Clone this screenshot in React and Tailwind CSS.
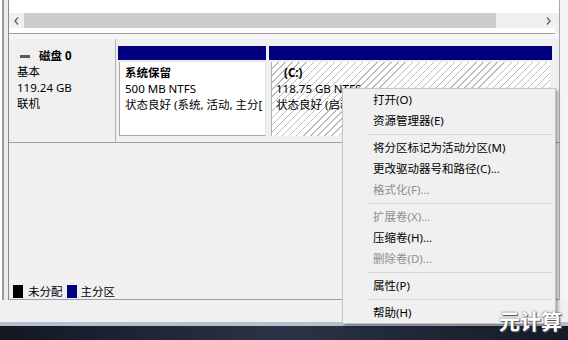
import React from "react";

const menuItems = [
  { label: "打开(O)" },
  { label: "资源管理器(E)" },
  { sep: true },
  { label: "将分区标记为活动分区(M)" },
  { label: "更改驱动器号和路径(C)..." },
  { label: "格式化(F)...", disabled: true },
  { sep: true },
  { label: "扩展卷(X)...", disabled: true },
  { label: "压缩卷(H)..." },
  { label: "删除卷(D)...", disabled: true },
  { sep: true },
  { label: "属性(P)" },
  { sep: true },
  { label: "帮助(H)" },
];

function Chevron({ dir }) {
  return (
    <svg width="5" height="8" viewBox="0 0 5 8">
      <path
        d={dir === "left" ? "M4 0.5 L1 4 L4 7.5" : "M1 0.5 L4 4 L1 7.5"}
        fill="none"
        stroke="#606060"
        strokeWidth="1.3"
      />
    </svg>
  );
}

function ContextMenu() {
  return (
    <div className="absolute left-[342px] top-[88px] w-[214px] bg-[#f0f0f0] border border-[#c4c4c4] shadow-[2px_2px_3px_rgba(0,0,0,0.35)]">
      {menuItems.map((item, i) =>
        item.sep ? (
          <div key={i} className="h-[6px] flex items-center ml-[24px] mr-[3px]">
            <div className="h-px w-full bg-[#d4d4d4]" />
          </div>
        ) : (
          <div
            key={i}
            className={
              "h-[21px] flex items-center pl-[30px] " +
              (item.disabled ? "text-[#8f8f8f]" : "text-black")
            }
          >
            {item.label}
          </div>
        )
      )}
    </div>
  );
}

export default function App() {
  return (
    <div className="relative w-[568px] h-[340px] overflow-hidden bg-[#f0f0f0] text-[11.5px] leading-[16px] text-black font-['Noto_Sans','Noto_Sans_CJK_SC',sans-serif]">
      <div className="flex h-[300px]">
        {/* left window frame */}
        <div className="flex shrink-0">
          <div className="w-[2px] bg-white" />
          <div className="w-[2px] bg-[#9a9a9a]" />
          <div className="w-[4px] bg-[#ececec]" />
          <div className="w-px bg-[#8a8a8a]" />
        </div>

        <div className="w-[550px] flex flex-col">
          {/* top list area + scrollbar */}
          <div className="h-[13px] bg-white" />
          <div className="h-[15px] flex items-center bg-[#f0f0f0]">
            <div className="w-[15px] flex justify-center">
              <Chevron dir="left" />
            </div>
            <div className="w-[472px] h-full bg-[#cdcdcd]" />
            <div className="flex-1" />
            <div className="w-[15px] flex justify-center">
              <Chevron dir="right" />
            </div>
            <div className="w-[3px]" />
          </div>
          <div className="h-[6px] bg-white border-b border-[#a0a0a0] mr-[4px]" />

          {/* disk area */}
          <div className="flex-1 flex flex-col bg-[#f0f0f0]">
            <div className="h-[5px] bg-[#f6f6f6]" />
            <div className="h-[104px] flex border-b border-[#a0a0a0]">
              <div className="ml-px w-[106px] border-r border-[#b4b4b4] pl-[7px] pt-[9px]">
                <div className="flex items-center font-bold">
                  <span className="ml-[3px] mr-[9px] w-[10px] h-[3px] bg-[#5a5a5a]" />
                  磁盘 0
                </div>
                <div>基本</div>
                <div>119.24 GB</div>
                <div>联机</div>
              </div>

              <div className="flex pl-[2px] pt-[7px] gap-[3px]">
                <div className="w-[148px] flex flex-col">
                  <div className="h-[14px] bg-[#000080]" />
                  <div className="mt-px ml-px h-[75px] bg-white border border-[#a8a8a8] border-t-[#e4e4e4] border-r-[#e4e4e4] pl-[5px] pt-[3px] whitespace-nowrap overflow-hidden">
                    <div className="font-bold">系统保留</div>
                    <div>500 MB NTFS</div>
                    <div>状态良好 (系统, 活动, 主分[</div>
                  </div>
                </div>

                <div className="w-[283px] flex flex-col">
                  <div className="h-[14px] bg-[#000080]" />
                  <div className="mt-[2px] mx-[2px] h-[74px] border-l border-[#b0b0b0] pl-[4px] pt-[3px] whitespace-nowrap overflow-hidden bg-[repeating-linear-gradient(135deg,#ffffff_0px,#ffffff_4px,#bdbdbd_4px,#bdbdbd_5px)]">
                    <div className="font-bold pl-[8px]">(C:)</div>
                    <div>118.75 GB NTFS</div>
                    <div>状态良好 (启动, 页面文件, 故障转储, 主分区)</div>
                  </div>
                </div>
              </div>
            </div>

            <div className="flex-1" />

            <div className="h-[16px] flex items-center pl-[4px] border-b border-[#a0a0a0]">
              <span className="w-[10px] h-[13px] bg-black" />
              <span className="ml-[5px]">未分配</span>
              <span className="ml-[4px] w-[10px] h-[13px] bg-[#000080]" />
              <span className="ml-[4px]">主分区</span>
            </div>
          </div>
        </div>

        {/* right window frame */}
        <div className="w-px bg-[#a8a8a8]" />
        <div className="w-[8px] bg-[#f4f4f4]" />
      </div>

      {/* status area + taskbar */}
      <div className="h-[22px] bg-[#f0f0f0]" />
      <div className="h-[4px] bg-[#b4c0cc]" />
      <div className="h-[14px] bg-gradient-to-r from-[#121722] via-[#2b3446] to-[#141a26]" />

      <ContextMenu />

      <div className="absolute left-[499px] top-[309px] text-[21px] leading-[24px] font-bold text-white [text-shadow:0_0_2px_#444,1px_1px_1px_#555]">
        元计算
      </div>
    </div>
  );
}
